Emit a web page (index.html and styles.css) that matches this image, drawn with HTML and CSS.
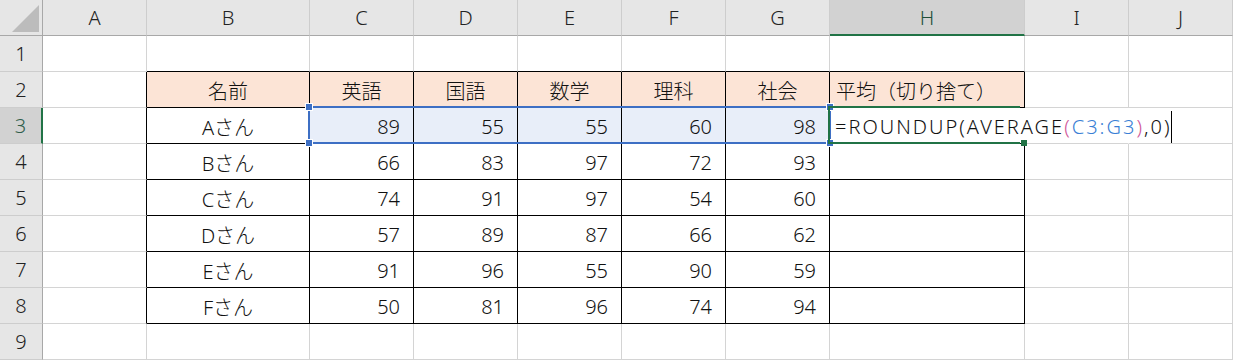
FILE: index.html
```html
<!DOCTYPE html>
<html lang="ja">
<head>
<meta charset="utf-8">
<title>Excel</title>
<link rel="stylesheet" href="styles.css">
</head>
<body>
<div class="sheet">
  <div class="corner"><svg width="42" height="35" viewBox="0 0 42 35"><polygon points="12,32 39,5 39,32" fill="#bcbcbc"/></svg></div>
  <div class="hc">A</div><div class="hc">B</div><div class="hc">C</div><div class="hc">D</div><div class="hc">E</div><div class="hc">F</div><div class="hc">G</div><div class="hc hsel">H</div><div class="hc">I</div><div class="hc">J</div>

  <div class="rh">1</div>
  <div class="c"></div><div class="c tt"></div><div class="c tt"></div><div class="c tt"></div><div class="c tt"></div><div class="c tt"></div><div class="c tt"></div><div class="c tt"></div><div class="c"></div><div class="c"></div>

  <div class="rh">2</div>
  <div class="c tl"></div><div class="c t th ctr">名前</div><div class="c t th ctr">英語</div><div class="c t th ctr">国語</div><div class="c t th ctr">数学</div><div class="c t th ctr">理科</div><div class="c t th ctr">社会</div><div class="c t th lft">平均（切り捨て）</div><div class="c"></div><div class="c"></div>

  <div class="rh rsel">3</div>
  <div class="c tl"></div><div class="c t ctr">Aさん</div><div class="c t n sel">89</div><div class="c t n sel">55</div><div class="c t n sel">55</div><div class="c t n sel">60</div><div class="c t n sel">98</div>
  <div class="c t edit"><span class="formula">=ROUNDUP(AVERAGE<span class="pk">(</span><span class="bl">C3:G3</span><span class="pk">)</span>,0)</span><span class="caret"></span></div>
  <div class="c nr"></div><div class="c"></div>

  <div class="rh">4</div>
  <div class="c tl"></div><div class="c t ctr">Bさん</div><div class="c t n">66</div><div class="c t n">83</div><div class="c t n">97</div><div class="c t n">72</div><div class="c t n">93</div><div class="c t"></div><div class="c"></div><div class="c"></div>

  <div class="rh">5</div>
  <div class="c tl"></div><div class="c t ctr">Cさん</div><div class="c t n">74</div><div class="c t n">91</div><div class="c t n">97</div><div class="c t n">54</div><div class="c t n">60</div><div class="c t"></div><div class="c"></div><div class="c"></div>

  <div class="rh">6</div>
  <div class="c tl"></div><div class="c t ctr">Dさん</div><div class="c t n">57</div><div class="c t n">89</div><div class="c t n">87</div><div class="c t n">66</div><div class="c t n">62</div><div class="c t"></div><div class="c"></div><div class="c"></div>

  <div class="rh">7</div>
  <div class="c tl"></div><div class="c t ctr">Eさん</div><div class="c t n">91</div><div class="c t n">96</div><div class="c t n">55</div><div class="c t n">90</div><div class="c t n">59</div><div class="c t"></div><div class="c"></div><div class="c"></div>

  <div class="rh">8</div>
  <div class="c tl"></div><div class="c t ctr">Fさん</div><div class="c t n">50</div><div class="c t n">81</div><div class="c t n">96</div><div class="c t n">74</div><div class="c t n">94</div><div class="c t"></div><div class="c"></div><div class="c"></div>

  <div class="rh">9</div>
  <div class="c"></div><div class="c"></div><div class="c"></div><div class="c"></div><div class="c"></div><div class="c"></div><div class="c"></div><div class="c"></div><div class="c"></div><div class="c"></div>

  <div class="range">
    <span class="hd h-tl"></span><span class="hd h-bl"></span><span class="hd h-tr"></span><span class="hd h-br"></span>
  </div>
  <div class="active"><span class="fill"></span></div>
</div>
</body>
</html>
```

FILE: styles.css
```css
* { box-sizing: border-box; }
html, body { margin: 0; padding: 0; background: #ffffff; }
body {
  font-family: "Noto Sans", "Noto Sans CJK JP", sans-serif;
  font-weight: 300;
  font-size: 20px;
  color: #111;
}
.sheet {
  position: relative;
  display: grid;
  grid-template-columns: 43px 104px 163px 104px 104px 104px 104px 104px 195px 104px 104px;
  grid-template-rows: repeat(10, 36px);
  width: 1233px;
  height: 360px;
  overflow: hidden;
}
.corner {
  background: #e6e6e6;
  border-right: 1px solid #a8a8a8;
  border-bottom: 1px solid #a8a8a8;
}
.corner svg { display: block; }
.hc {
  background: #e6e6e6;
  border-right: 1px solid #cdcdcd;
  border-bottom: 1px solid #a8a8a8;
  display: flex;
  align-items: center;
  justify-content: center;
  color: #222;
}
.hsel {
  background: #d2d2d2;
  border-bottom: 2px solid #217346;
  color: #1f4f3a;
}
.rh {
  background: #e6e6e6;
  border-right: 1px solid #a8a8a8;
  border-bottom: 1px solid #cdcdcd;
  display: flex;
  align-items: center;
  justify-content: center;
  color: #222;
}
.rsel {
  background: #d2d2d2;
  border-right: 2px solid #217346;
  color: #2f5e4a;
}
.c {
  border-right: 1px solid #d4d4d4;
  border-bottom: 1px solid #d4d4d4;
  display: flex;
  align-items: center;
  white-space: nowrap;
  padding-top: 2px;
}
.tl { border-right-color: #000; }
.tt { border-bottom-color: #000; }
.t { border-right-color: #000; border-bottom-color: #000; }
.th { background: #fce4d6; }
.ctr { justify-content: center; }
.lft { justify-content: flex-start; padding-left: 6px; }
.n { justify-content: flex-end; padding-right: 13px; }
.sel { background: #e8eef9; }
.edit {
  position: relative;
  z-index: 2;
  background: #fff;
  border-right-color: #fff;
  padding-left: 5px;
  overflow: visible;
}
.formula { letter-spacing: 2px; flex-shrink: 0; }
.pk { color: #d0579a; }
.bl { color: #3a7fd5; }
.caret {
  flex-shrink: 0;
  display: inline-block;
  width: 1px;
  height: 32px;
  background: #000;
  margin-left: 0;
}
.nr { border-right-color: #fff; }
.range {
  position: absolute;
  left: 308px;
  top: 106px;
  width: 523px;
  height: 38px;
  border: 2px solid #3d6fc4;
  pointer-events: none;
  z-index: 3;
}
.hd {
  position: absolute;
  width: 6px;
  height: 6px;
  background: #3d6fc4;
  outline: 1px solid #fff;
}
.h-tl { left: -4px; top: -4px; }
.h-bl { left: -4px; bottom: -4px; }
.h-tr { right: -4px; top: -4px; }
.h-br { right: -4px; bottom: -4px; }
.active {
  position: absolute;
  left: 828px;
  top: 106px;
  width: 192px;
  height: 38px;
  border: 2px solid #217346;
  border-right: none;
  pointer-events: none;
  z-index: 4;
}
.fill {
  position: absolute;
  right: -7px;
  bottom: -4px;
  width: 6px;
  height: 6px;
  background: #217346;
}
```
